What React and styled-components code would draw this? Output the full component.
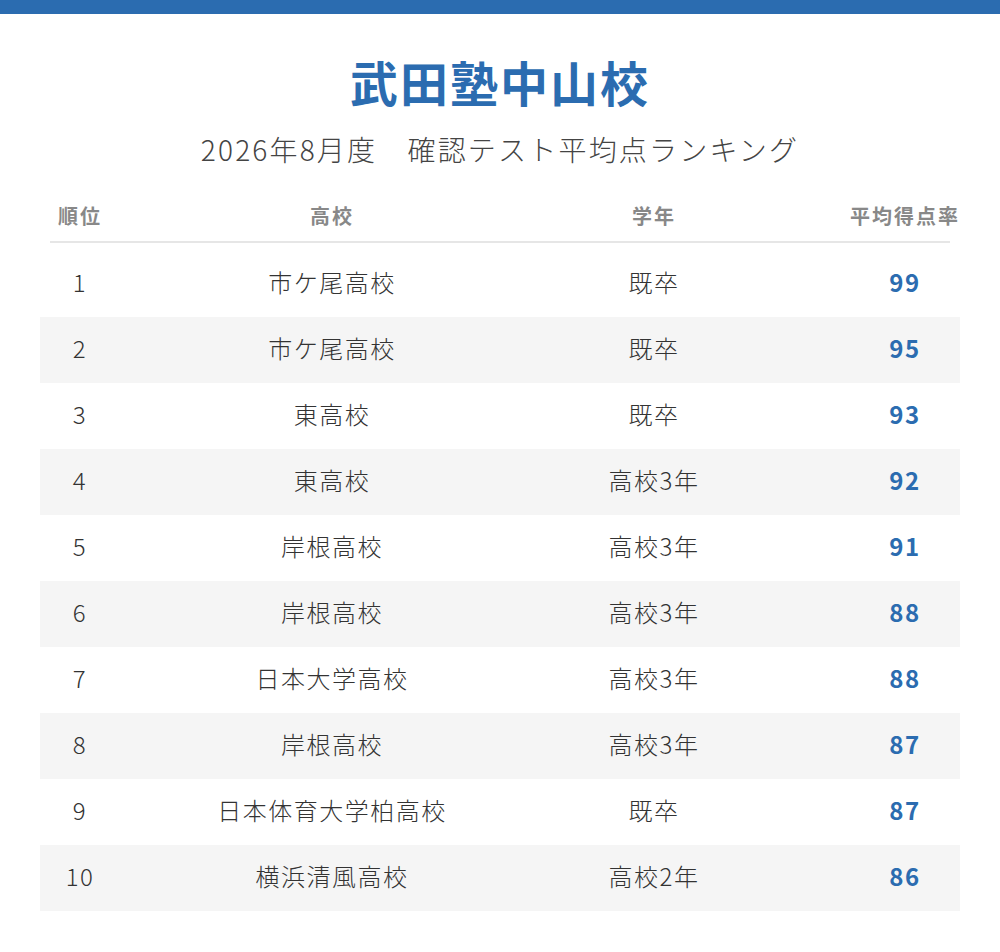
import styled, { createGlobalStyle } from "styled-components";

const GlobalStyle = createGlobalStyle`
  body {
    margin: 0;
    background: #fff;
    font-family: "Noto Sans CJK JP", "Noto Sans", sans-serif;
  }
`;

const BLUE = "#2b6cb0";

const rows = [
  { rank: 1, school: "市ケ尾高校", grade: "既卒", score: 99 },
  { rank: 2, school: "市ケ尾高校", grade: "既卒", score: 95 },
  { rank: 3, school: "東高校", grade: "既卒", score: 93 },
  { rank: 4, school: "東高校", grade: "高校3年", score: 92 },
  { rank: 5, school: "岸根高校", grade: "高校3年", score: 91 },
  { rank: 6, school: "岸根高校", grade: "高校3年", score: 88 },
  { rank: 7, school: "日本大学高校", grade: "高校3年", score: 88 },
  { rank: 8, school: "岸根高校", grade: "高校3年", score: 87 },
  { rank: 9, school: "日本体育大学柏高校", grade: "既卒", score: 87 },
  { rank: 10, school: "横浜清風高校", grade: "高校2年", score: 86 },
];

const TopBar = styled.div`
  height: 14px;
  background: ${BLUE};
`;

const Page = styled.main`
  padding: 39px 40px 40px;
`;

const Title = styled.h1`
  margin: 0;
  text-align: center;
  font-size: 48px;
  line-height: 1.2;
  font-weight: 700;
  letter-spacing: 2px;
  color: ${BLUE};
`;

const Subtitle = styled.p`
  margin: 22px 0 0;
  text-align: center;
  font-size: 28px;
  line-height: 1.2;
  font-weight: 300;
  letter-spacing: 2.2px;
  color: #444;
`;

const Table = styled.div`
  margin-top: 24px;
`;

const Grid = styled.div`
  display: grid;
  grid-template-columns: 80px 424px 220px 1fr;
  align-items: center;
`;

const HeadRow = styled(Grid)`
  height: 51px;
  margin: 0 10px;
  border-bottom: 2px solid #e6e6e6;
  grid-template-columns: 60px 444px 200px 1fr;
`;

const HeadCell = styled.div`
  text-align: center;
  font-size: 20px;
  font-weight: 700;
  letter-spacing: 2px;
  color: #888;
  white-space: nowrap;
  ${(p) => p.$end && "justify-self: end; width: 110px; margin-right: -10px;"}
`;

const Body = styled.div`
  margin-top: 8px;
`;

const Row = styled(Grid)`
  height: 66px;
  background: ${(p) => (p.$striped ? "#f5f5f5" : "#fff")};
`;

const Cell = styled.div`
  padding-bottom: 6px;
  text-align: center;
  font-size: 24px;
  font-weight: 300;
  letter-spacing: 1.5px;
  color: #333;
  white-space: nowrap;
`;

const Score = styled(Cell)`
  justify-self: end;
  width: 110px;
  font-weight: 700;
  color: ${BLUE};
`;

export default function App() {
  return (
    <>
      <GlobalStyle />
      <TopBar />
      <Page>
        <Title>武田塾中山校</Title>
        <Subtitle>2026年8月度　確認テスト平均点ランキング</Subtitle>
        <Table>
          <HeadRow>
            <HeadCell>順位</HeadCell>
            <HeadCell>高校</HeadCell>
            <HeadCell>学年</HeadCell>
            <HeadCell $end>平均得点率</HeadCell>
          </HeadRow>
          <Body>
            {rows.map((r, i) => (
              <Row key={r.rank} $striped={i % 2 === 1}>
                <Cell>{r.rank}</Cell>
                <Cell>{r.school}</Cell>
                <Cell>{r.grade}</Cell>
                <Score>{r.score}</Score>
              </Row>
            ))}
          </Body>
        </Table>
      </Page>
    </>
  );
}
